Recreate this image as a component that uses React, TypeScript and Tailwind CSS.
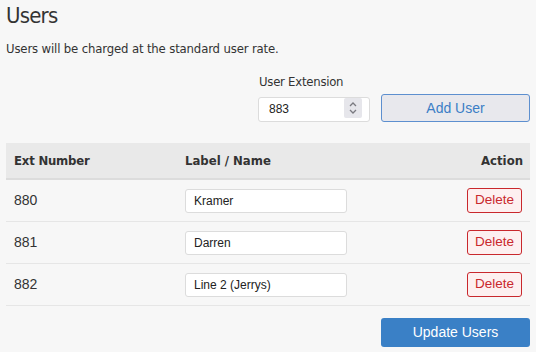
import { useState } from "react";

const users = [
  { ext: "880", name: "Kramer" },
  { ext: "881", name: "Darren" },
  { ext: "882", name: "Line 2 (Jerrys)" },
];

function Spinner() {
  return (
    <div className="absolute right-[8px] top-[2px] flex h-[20px] w-[18px] items-center justify-center rounded-[2px] bg-[#e6e6eb]">
      <svg width="10" height="16" viewBox="0 0 10 16" fill="none" stroke="#7a7a80" strokeWidth="1.3">
        <path d="M2 6 L5 3 L8 6" />
        <path d="M2 10 L5 13 L8 10" />
      </svg>
    </div>
  );
}

export default function App() {
  const [ext, setExt] = useState("883");
  const [rows, setRows] = useState(users);

  return (
    <div
      className="min-h-[352px] w-full bg-[#f7f7f7] px-[6px] text-[#333] font-stretch-condensed"
      style={{ fontFamily: "'DejaVu Sans', Verdana, sans-serif" }}
    >
      <h1 className="pt-[2px] text-[22px] leading-[28px] font-normal tracking-[-0.8px]">Users</h1>
      <p className="mt-[11px] text-[13px] leading-[16px] tracking-[-0.15px]">
        Users will be charged at the standard user rate.
      </p>

      <div className="mt-[17px] flex justify-end">
        <div className="flex flex-col">
          <label className="pl-[1px] text-[13px] leading-[16px] tracking-[-0.25px]">User Extension</label>
          <div className="mt-[4px] flex items-start gap-[11px]">
            <div className="relative mt-[2px]">
              <input
                value={ext}
                onChange={(e) => setExt(e.target.value)}
                className="h-[25px] w-[112px] rounded-[3px] border border-[#dcdcdc] bg-white pl-[10px] text-[12px] text-[#222] outline-none"
                style={{ fontFamily: "'Liberation Sans', Arial, sans-serif" }}
              />
              <Spinner />
            </div>
            <button
              className="h-[28px] w-[149px] rounded-[3px] border border-[#5d8fcf] bg-[#e8e8ed] text-[14px] text-[#3b7ec6]"
              style={{ fontFamily: "'Liberation Sans', Arial, sans-serif" }}
            >
              Add User
            </button>
          </div>
        </div>
      </div>

      <table className="mt-[21px] w-full border-collapse">
        <thead>
          <tr className="border-b-2 border-[#dcdcdc] bg-[#e9e9e9]">
            <th className="h-[36px] w-[171px] pl-[8px] text-left text-[13px] font-bold tracking-[-0.2px]">Ext Number</th>
            <th className="pl-[8px] text-left text-[13px] font-bold">Label / Name</th>
            <th className="pr-[7px] text-right text-[13px] font-bold">Action</th>
          </tr>
        </thead>
        <tbody className="font-stretch-normal" style={{ fontFamily: "'Liberation Sans', Arial, sans-serif" }}>
          {rows.map((u, i) => (
            <tr key={u.ext} className="border-b border-[#e6e6e6]">
              <td className="h-[42px] pl-[8px] text-[14px] text-[#333]">{u.ext}</td>
              <td className="pl-[8px]">
                <input
                  value={u.name}
                  onChange={(e) =>
                    setRows(rows.map((r, j) => (j === i ? { ...r, name: e.target.value } : r)))
                  }
                  className="h-[24px] w-[162px] rounded-[3px] border border-[#dcdcdc] bg-white pl-[8px] text-[12px] text-[#222] outline-none"
                />
              </td>
              <td className="pr-[8px] text-right">
                <button className="h-[25px] w-[55px] rounded-[3px] border border-[#c9282d] bg-[#fdf0f0] text-[13.5px] text-[#c9282d]">
                  Delete
                </button>
              </td>
            </tr>
          ))}
        </tbody>
      </table>

      <div className="mt-[12px] flex justify-end">
        <button
          className="h-[29px] w-[149px] rounded-[3px] bg-[#3a80c6] text-[14px] text-white"
          style={{ fontFamily: "'Liberation Sans', Arial, sans-serif" }}
        >
          Update Users
        </button>
      </div>
    </div>
  );
}
